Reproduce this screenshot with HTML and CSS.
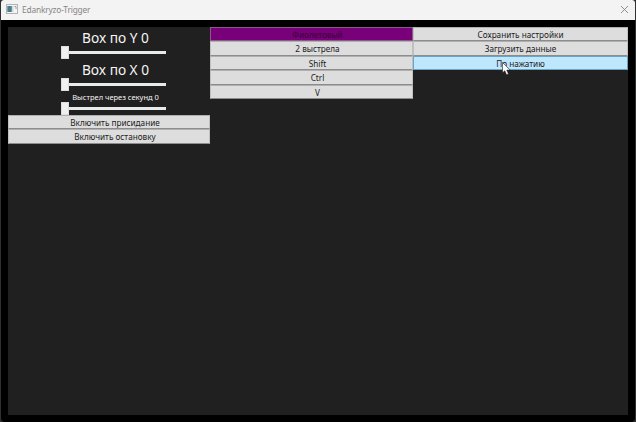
FILE: index.html
```html
<!DOCTYPE html>
<html lang="ru">
<head>
<meta charset="utf-8">
<title>Edankryzo-Trigger</title>
<link rel="stylesheet" href="styles.css">
</head>
<body>
<div class="window">
  <header class="titlebar">
    <svg class="app-icon" width="12" height="10" viewBox="0 0 12 10">
      <rect x=".5" y=".5" width="11" height="9" fill="#f4f4f4" stroke="#b3b3b3"/>
      <rect x="1.3" y="2" width="4.5" height="6" fill="#477f8b"/>
      <rect x="6" y="2" width="1.5" height="6" fill="#d0d8da"/>
      <path d="M8.5 2.5H10V5" fill="none" stroke="#8a8a8a" stroke-width=".8"/>
    </svg>
    <span class="title">Edankryzo-Trigger</span>
    <svg class="close" width="9" height="9" viewBox="0 0 9 9"><path d="M1 1L8 8M8 1L1 8" stroke="#858585" stroke-width=".9"/></svg>
  </header>
  <main class="client">
    <section class="column">
      <div class="control">
        <span class="label large">Box по Y 0</span>
        <div class="slider"><i class="thumb"></i><i class="track"></i></div>
      </div>
      <div class="control">
        <span class="label large">Box по X 0</span>
        <div class="slider"><i class="thumb"></i><i class="track"></i></div>
      </div>
      <div class="control short">
        <span class="label small">Выстрел через секунд 0</span>
        <div class="slider"><i class="thumb"></i><i class="track"></i></div>
      </div>
      <button>Включить присидание</button>
      <button>Включить остановку</button>
    </section>
    <section class="column">
      <button class="violet">Фиолетовый</button>
      <button>2 выстрела</button>
      <button>Shift</button>
      <button>Ctrl</button>
      <button>V</button>
    </section>
    <section class="column last">
      <button>Сохранить настройки</button>
      <button>Загрузить данные</button>
      <button class="hover">По нажатию</button>
    </section>
  </main>
  <svg class="cursor" width="9" height="14" viewBox="0 0 9 14"><path d="M.5 .5V10.8L2.8 8.8L4.5 12.8L6.5 12L4.8 8.1H8.2Z" fill="#fff" stroke="#222" stroke-width=".6"/></svg>
</div>
</body>
</html>
```

FILE: styles.css
```css
* { box-sizing: border-box; }
body {
  margin: 0;
  background: #303030;
  font-family: "Noto Sans", "Open Sans", sans-serif;
}
.window {
  position: relative;
  width: 634px;
  height: 422px;
  margin-left: 1px;
  background: #000;
  border-radius: 3px 3px 4px 4px;
  overflow: hidden;
}
.titlebar {
  display: flex;
  align-items: center;
  height: 20px;
  padding: 0 6px 2px 5px;
  background: #f3f3f3;
}
.title {
  margin: 1px 0 0 4px;
  font-size: 8.3px;
  letter-spacing: -.15px;
  line-height: 12px;
  color: #858585;
}
.close { margin-left: auto; }
.client {
  display: grid;
  grid-template-columns: 202px 203px 215px;
  width: 620px;
  height: 388px;
  margin: 7px 0 0 7px;
  background: #202020;
}
.column { display: flex; flex-direction: column; }
.control {
  display: flex;
  flex-direction: column;
  align-items: center;
  height: 32px;
  color: #f5f5f5;
  white-space: nowrap;
}
.control.short { height: 24px; }
.label { display: block; }
.large {
  height: 19px;
  margin-left: 13px;
  font-size: 13.7px;
  line-height: 22px;
}
.small {
  height: 11px;
  margin-left: 13px;
  font-size: 7.5px;
  line-height: 12px;
}
.slider {
  display: flex;
  align-items: center;
  width: 105px;
  height: 13px;
  margin-left: 9px;
}
.thumb {
  width: 8px;
  height: 13px;
  background: #f0f0f0;
  border: 1px solid #dcdcdc;
}
.track { flex: 1; height: 3px; background: #e7eaea; }
button {
  display: block;
  width: 100%;
  height: 14.4px;
  margin: 0;
  padding: 1px 0 0 12px;
  border: 1px solid #8c8c8c;
  border-top-color: #b0b0b0;
  border-left-color: #c0c0c0;
  border-right-color: #c0c0c0;
  background: #ddd;
  color: #1c1c1c;
  font: 8.2px/12px "Noto Sans", "Open Sans", sans-serif;
  text-align: center;
}
.last button { padding-left: 0; }
.violet { background: #780078; border-color: #8b5a8b; color: #390039; }
.hover { background: #bee6fd; border-color: #6aa5c5; }
.cursor { position: absolute; left: 501px; top: 62px; }
```
